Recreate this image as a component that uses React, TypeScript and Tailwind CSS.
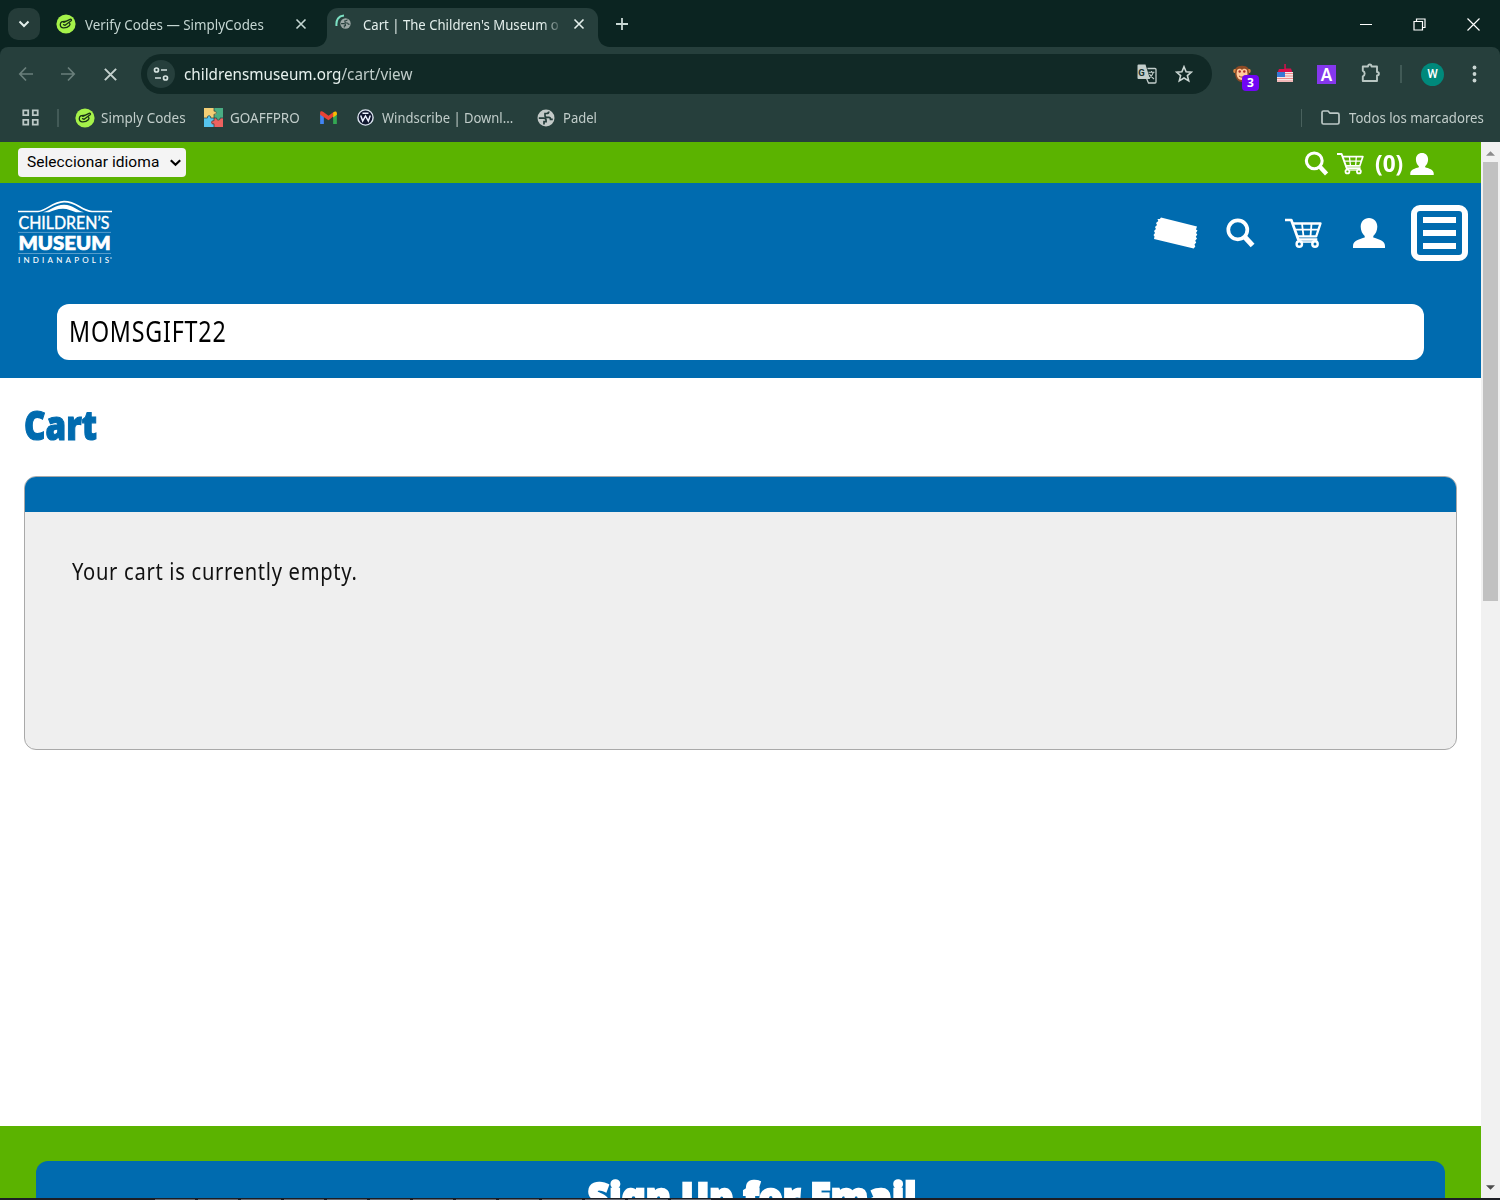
import React from "react";

const CHROME_FONT = "font-['Noto_Sans','Open_Sans',sans-serif]";

type IconProps = { className?: string };

function CloseIcon({ className }: IconProps) {
  return (
    <svg viewBox="0 0 12 12" className={className} fill="none" stroke="currentColor" strokeWidth="1.6">
      <path d="M1.5 1.5l9 9M10.5 1.5l-9 9" />
    </svg>
  );
}

function SimplyIcon() {
  return (
    <svg viewBox="0 0 20 20" className="size-5 shrink-0">
      <circle cx="10" cy="10" r="9.6" fill="#a5f24a" />
      <path
        d="M9.500 7.400C6 7 4.500 8.200 4.300 10.200c-.2 2.300 1.200 3.900 3.500 3.700 2.300-.1 4.300-.9 5.500-2.200.8-.9.9-1.900.3-2.600M7.500 10.700l1.600.6 6-4.600c.9-.8.1-1.900-1-1.400L7.800 8.400"
        fill="none"
        stroke="#183116"
        strokeWidth="1.3"
        strokeLinecap="round"
        strokeLinejoin="round"
      />
    </svg>
  );
}

function GlobeIcon({ className }: IconProps) {
  return (
    <svg viewBox="0 0 18 18" className={className}>
      <circle cx="9" cy="9" r="8.500" fill="#c3cac8" />
      <path
        d="M1.800 9.200h4.700c1.700 0 2.600.8 2.600 2.200v1.200H7v2.900M11.800 2.500c0 1.600-.8 2-2.200 2H8v2.200c0 1.200.7 1.600 1.800 1.600h2c1.300 0 1.700.8 1.700 2h2.300"
        fill="none"
        stroke="#263f3c"
        strokeWidth="1.700"
      />
    </svg>
  );
}

function SearchIcon({ className }: IconProps) {
  return (
    <svg viewBox="0 0 29 30" className={className} fill="none" stroke="white">
      <circle cx="11.800" cy="11.800" r="9.500" strokeWidth="3.700" />
      <path d="M18.300 18.500l8.300 9" strokeWidth="5.200" />
    </svg>
  );
}

function CartIcon({ className }: IconProps) {
  return (
    <svg viewBox="0 0 37 30" className={className} fill="none" stroke="white" strokeLinejoin="round">
      <path d="M0 2h6.300l7 19.500h19" strokeWidth="2.700" />
      <path d="M8 5.500h27.500l-4.300 12.800H12.500" strokeWidth="2.300" />
      <path d="M10 11.700h23M17 5.500l1.500 12.800M26.500 5.500L25.500 18.300" strokeWidth="1.800" />
      <circle cx="14.300" cy="26" r="2.700" strokeWidth="2.400" />
      <circle cx="30" cy="26" r="2.700" strokeWidth="2.400" />
      <path d="M17 24h10.500" strokeWidth="1.600" />
    </svg>
  );
}

function PersonIcon({ className }: IconProps) {
  return (
    <svg viewBox="0 0 32 30" className={className} fill="white">
      <path d="M16 0c5 0 8.300 3.600 8.300 8.700 0 4-1.800 7.300-4 9.400v1.500c4.700 1.300 11.700 3.300 11.700 8.300V30H0v-2.100c0-5 7-7 11.700-8.300v-1.500c-2.200-2.100-4-5.400-4-9.400C7.700 3.600 11 0 16 0z" />
    </svg>
  );
}

function Logo() {
  return (
    <svg viewBox="0 0 94 64" className="mt-[18px] ml-[18px] h-16 w-[94px] overflow-visible">
      <path d="M0 10.500h20c9-.6 14-9.500 26-9.800C59 .5 63 9.900 74 10.500h20" fill="none" stroke="white" strokeWidth="1.700" />
      <path d="M25 11.200C32 10 37 4 46 3.800c9 0 13 6 20 7.400h-8c-5-1.500-8-3.500-13-3.500-6 0-10 2-14 3.500z" fill="white" />
      <text x="0.500" y="27.800" textLength="91" lengthAdjust="spacingAndGlyphs" fill="white" stroke="white" strokeWidth="0.400" fontSize="17.500" fontFamily="Lato, sans-serif">
        CHILDREN’S
      </text>
      <path d="M0 31.400h93M0 52.500h93" stroke="#5fa3cf" strokeWidth="0.900" />
      <text x="0.500" y="48.500" textLength="92" lengthAdjust="spacingAndGlyphs" fill="white" stroke="white" strokeWidth="0.700" fontSize="18" fontWeight="900" fontFamily="Lato, sans-serif">
        MUSEUM
      </text>
      <text x="0" y="62" textLength="91" fill="white" fontSize="8" fontWeight="500" fontFamily="Lato, sans-serif">
        INDIANAPOLIS
      </text>
      <circle cx="93" cy="57" r="0.700" fill="white" />
    </svg>
  );
}

function TabStrip() {
  return (
    <div className="flex h-[47px] shrink-0 bg-[#0b2421] text-[15px] text-[#c5d6d2]">
      <div className="mt-2 ml-2 flex size-8 items-center justify-center rounded-[10px] bg-[#253c39]">
        <svg viewBox="0 0 12 8" className="h-2 w-3" fill="none" stroke="#e3eeeb" strokeWidth="2">
          <path d="M1.500 1.500L6 6l4.500-4.500" />
        </svg>
      </div>
      <div className="flex h-12 w-[287px] items-center pl-4">
        <SimplyIcon />
        <span className="ml-[9px] w-[203px] origin-left scale-x-[0.892] whitespace-nowrap">Verify Codes — SimplyCodes</span>
        <CloseIcon className="ml-[7px] size-3" />
      </div>
      <div className="relative mt-2 flex h-[39px] w-[271px] rounded-t-[11px] bg-[#263f3c] text-[#e4efec]">
        <svg viewBox="0 0 12 12" className="absolute bottom-0 -left-3 size-3">
          <path d="M12 0v12H0c7 0 12-5 12-12z" fill="#263f3c" />
        </svg>
        <svg viewBox="0 0 12 12" className="absolute -right-3 bottom-0 size-3">
          <path d="M0 0v12h12C5 12 0 7 0 0z" fill="#263f3c" />
        </svg>
        <div className="relative mt-[10px] ml-[13px] size-3">
          <GlobeIcon className="size-[11px] opacity-75" />
          <svg viewBox="0 0 17 17" className="absolute -top-[4px] -left-[5px] size-[17px]" fill="none" stroke="#7ce0c3" strokeWidth="2">
            <path d="M1.500 12C.8 6 3.500 2 9 1.500" />
          </svg>
        </div>
        <div className="mt-[5px] ml-[11px] h-6 w-[196px] [mask-image:linear-gradient(90deg,black_180px,transparent_200px)]">
          <span className="inline-block origin-left scale-x-[0.876] leading-[23px] whitespace-nowrap">Cart | The Children's Museum o</span>
        </div>
        <CloseIcon className="mt-[10px] ml-[14px] size-3" />
      </div>
      <svg viewBox="0 0 14 14" className="mt-[17px] ml-[17px] size-[14px]" stroke="#c9d8d4" strokeWidth="1.800">
        <path d="M7 1v12M1 7h12" />
      </svg>
      <div className="mr-5 ml-auto flex items-center gap-[41px] pt-px text-white">
        <div className="h-px w-3 bg-white" />
        <svg viewBox="0 0 13 13" className="size-[13px]" fill="none" stroke="currentColor" strokeWidth="1.200">
          <path d="M1 3.500h8.500V12H1zM3.500 3.500V1H12v8.500H9.500" />
        </svg>
        <svg viewBox="0 0 13 13" className="size-[13px]" stroke="currentColor" strokeWidth="1.200">
          <path d="M.5.5l12 12M12.500.5l-12 12" />
        </svg>
      </div>
    </div>
  );
}

function Toolbar() {
  return (
    <div className="flex h-[54px] items-center rounded-tr-lg rounded-tl-lg bg-[#263f3c] text-[#c3d0cd]">
      <svg viewBox="0 0 16 16" className="ml-[18px] size-4" fill="none" stroke="#6a7f7b" strokeWidth="1.700">
        <path d="M15 8H2M8 1.500L1.800 8 8 14.500" />
      </svg>
      <svg viewBox="0 0 16 16" className="ml-[26px] size-4" fill="none" stroke="#6a7f7b" strokeWidth="1.700">
        <path d="M1 8h13M8 1.500L14.200 8 8 14.500" />
      </svg>
      <CloseIcon className="ml-[27px] size-[15px]" />
      <div className="ml-[23px] flex h-10 w-[1071px] items-center rounded-full bg-[#112926] pl-[6px] text-[16px]">
        <div className="flex size-7 items-center justify-center rounded-full bg-[#263f3c]">
          <svg viewBox="0 0 16 16" className="size-4" fill="none" stroke="#d5e2df" strokeWidth="1.700">
            <circle cx="3.500" cy="4" r="2" />
            <path d="M8 4h6M2 12h6" />
            <circle cx="12.500" cy="12" r="2" />
          </svg>
        </div>
        <span className="ml-[9px] w-[300px] origin-left scale-x-[0.953] whitespace-nowrap text-[#e7f1ee]">
          childrensmuseum.org<span className="text-[#c0cdca]">/cart/view</span>
        </span>
        <svg viewBox="0 0 20 20" className="ml-auto h-5 w-5">
          <path d="M1.500.500h7L13 15H1.500a1 1 0 01-1-1V1.500a1 1 0 011-1z" fill="#c3cecb" />
          <path d="M10.500 4.500H18a1 1 0 011 1V18a1 1 0 01-1 1h-6.500l-1.800-4.300" fill="none" stroke="#c3cecb" strokeWidth="1.300" />
          <text x="1.200" y="11.500" fontSize="9.500" fontWeight="700" fill="#17302d" fontFamily="Roboto, sans-serif">G</text>
          <path d="M11.500 8.200h6M14.500 7v1.200M16.500 8.200c-.8 2.800-2.200 4.300-4.500 6M12.500 10c1 2 2.500 3.500 4.500 5" fill="none" stroke="#c3cecb" strokeWidth="1.100" />
        </svg>
        <svg viewBox="0 0 18 18" className="mr-[19px] ml-[18px] size-[18px]" fill="none" stroke="#cbd6d3" strokeWidth="1.600">
          <path d="M9 1.700l2.100 5 5.400.4-4.100 3.500 1.300 5.300L9 13l-4.700 2.900 1.300-5.300L1.500 7.100l5.400-.4z" />
        </svg>
      </div>
      <div className="relative ml-[21px] size-[18px]">
        <svg viewBox="0 0 18 18" className="size-[18px]">
          <circle cx="2.500" cy="6" r="2.300" fill="#d98642" />
          <circle cx="15.500" cy="6" r="2.300" fill="#d98642" />
          <path d="M3 3c2-3 10-3 12 0l1 5c0 4-2 9-7 9S2 12 2 8z" fill="#8d4a25" />
          <path d="M4 5c2-2 4-1 5 0 1-1 3-2 5 0l.5 4c-.5 3-2 6-5.500 6S4 12 3.500 9z" fill="#ffc99b" />
          <circle cx="6.700" cy="6.500" r="1.200" fill="#b12b26" />
          <circle cx="11.300" cy="6.500" r="1.200" fill="#b12b26" />
          <path d="M6 11c2 1.500 4 1.500 6 0" stroke="#9b4525" fill="none" />
        </svg>
        <span className="absolute top-[10px] left-[9px] flex h-4 w-[17px] items-center justify-center rounded-[4px] bg-[#7105f5] font-['Noto_Sans',sans-serif] text-[12px] font-bold text-white">
          3
        </span>
      </div>
      <svg viewBox="0 0 18 20" className="mb-[2px] ml-[25px] h-5 w-[18px]">
        <path d="M8.300 1h1.500v4.500H15l2 5.500H1l2-5h5.300z" fill="#d90f4d" />
        <path d="M1 9h16v10H1z" fill="#f5e8e8" />
        <path d="M1 9h8v5H1z" fill="#3978d5" />
        <path d="M9 10.500h8M9 13h8M1 15.500h16M1 18h16" stroke="#ed8a8a" strokeWidth="1" />
      </svg>
      <span className="ml-[23px] flex h-[19px] w-[19px] items-center justify-center bg-[#8537ed] font-['Noto_Sans',sans-serif] text-[17px] leading-none font-semibold text-white">
        A
      </span>
      <svg viewBox="0 0 20 20" className="mb-[2px] ml-6 size-5" fill="none" stroke="#b9c7c3" strokeWidth="1.900" strokeLinejoin="round">
        <path d="M2.800 3.500h5.200c0-2.600 3.500-2.600 3.500 0H17v5.500c2.500 0 2.500 3.500 0 3.500V18H2.800v-4.700c2.500-.8 2.500-4.700 0-5.500z" />
      </svg>
      <div className="ml-5 h-[18px] w-[2px] bg-[#415a56]" />
      <div className="ml-[19px] flex size-[23px] items-center justify-center rounded-full bg-[#00897b] font-['Roboto',sans-serif] text-[12px] font-medium text-white">W</div>
      <svg viewBox="0 0 4 18" className="ml-7 h-[18px] w-[5px]" fill="#c9d5d2">
        <circle cx="2" cy="2.500" r="1.900" />
        <circle cx="2" cy="9" r="1.900" />
        <circle cx="2" cy="15.500" r="1.900" />
      </svg>
    </div>
  );
}

function Bookmarks() {
  return (
    <div className="flex h-[41px] items-center bg-[#263f3c] pb-2 text-[14.500px] whitespace-nowrap text-[#c1cdca]">
      <svg viewBox="0 0 17 17" className="ml-[22px] size-[17px] shrink-0" fill="none" stroke="#bcc9c6" strokeWidth="1.800">
        <path d="M1.300 1.300h4.900v4.900H1.300zM10.800 1.300h4.900v4.900h-4.900zM1.300 10.800h4.900v4.900H1.300zM10.800 10.800h4.900v4.900h-4.900z" />
      </svg>
      <div className="ml-[18px] h-[18px] w-[2px] bg-[#425a57]" />
      <div className="ml-4 flex w-[129px] items-center gap-[6px]">
        <SimplyIcon />
        <span className="w-[84px] origin-left scale-x-[0.93]">Simply Codes</span>
      </div>
      <div className="flex w-[115px] items-center gap-[7px]">
        <svg viewBox="0 0 19 19" className="size-[19px] shrink-0">
          <path d="M0 0h10v10H0z" fill="#f3ce75" />
          <path d="M10 0h9v10h-9z" fill="#49ad83" />
          <path d="M0 10h10v9H0z" fill="#56c4ee" />
          <path d="M10 10h9v9h-9z" fill="#ed625f" />
          <circle cx="10.500" cy="5" r="2" fill="#f3ce75" />
          <circle cx="14.500" cy="10" r="2" fill="#49ad83" />
          <circle cx="9" cy="14.500" r="2" fill="#ed625f" />
          <circle cx="5" cy="9.500" r="2" fill="#56c4ee" />
          <path d="M10 0v3.200c3-1 3 4 0 3V10h2.700c-.7 2.800 4 2.800 3.300 0h3M10 19v-3.200c-3 1-3-4 0-3V10H6.700c.7-3-4-3-3.300 0H0" fill="none" stroke="#263f3c" strokeWidth="0.700" />
        </svg>
        <span className="w-[70px] origin-left scale-x-[0.93]">GOAFFPRO</span>
      </div>
      <svg viewBox="0 0 18 14" className="ml-px h-[13px] w-[17px] shrink-0">
        <path d="M0 2.500V14h4V6z" fill="#4285f4" />
        <path d="M18 2.500V14h-4V6z" fill="#34a853" />
        <path d="M0 4V2C0 0 2 0 3.500 1L9 5l5.500-4L14 6 9 10z" fill="#ea4335" />
        <path d="M14 1.500C16 0 18 0 18 2.500V4l-4 3z" fill="#fbbc04" />
      </svg>
      <div className="ml-5 flex w-[180px] items-center gap-2">
        <svg viewBox="0 0 17 17" className="size-[17px] shrink-0">
          <circle cx="8.500" cy="8.500" r="7.600" fill="#10172f" stroke="#dce4ef" strokeWidth="1.400" />
          <path d="M3.700 6.500l2 5.500 2.800-5 2.800 5 2-5.500M5.500 4.300h6" fill="none" stroke="#eef3ff" strokeWidth="1.500" />
        </svg>
        <span className="w-[132px] origin-left scale-x-[0.897]">Windscribe | Downl...</span>
      </div>
      <div className="flex items-center gap-2">
        <GlobeIcon className="size-[18px] shrink-0" />
        <span className="origin-left scale-x-[0.9]">Padel</span>
      </div>
      <div className="ml-auto h-[18px] w-px bg-[#49615d]" />
      <svg viewBox="0 0 19 15" className="ml-[19px] h-[15px] w-[19px] shrink-0" fill="none" stroke="#bdc9c6" strokeWidth="1.700">
        <path d="M1 2.500Q1 1 2.500 1H7l2 2.200h7.500Q18 3.200 18 4.700v7.800q0 1.500-1.500 1.500h-14Q1 14 1 12.500z" />
      </svg>
      <span className="ml-[9px] w-[151px] origin-left scale-x-[0.908]">Todos los marcadores</span>
    </div>
  );
}

function TopBar() {
  return (
    <div className="flex h-[41px] shrink-0 items-center bg-[#5bb300]">
      <div className="ml-[18px] flex h-[29px] w-[168px] items-center rounded-[4px] bg-[#f4f4f4] pl-[9px] text-[15.500px] text-black">
        <span className="w-[133px] pt-px font-['Roboto',sans-serif] tracking-[0.05px] whitespace-nowrap">Seleccionar idioma</span>
        <svg viewBox="0 0 11 8" className="ml-[10px] h-2 w-[11px]" fill="none" stroke="black" strokeWidth="2.200">
          <path d="M.8 1.200l4.700 4.500 4.700-4.500" />
        </svg>
      </div>
      <SearchIcon className="mt-[2px] ml-auto h-[25px] w-[25px]" />
      <CartIcon className="mt-px ml-2 h-[23px] w-[27px]" />
      <span className="ml-[11px] w-[30px] origin-left scale-x-[0.94] font-['Noto_Sans',sans-serif] text-[24px] leading-none font-bold text-white">(0)</span>
      <PersonIcon className="mt-[3px] mr-[47px] ml-[5px] h-[22px] w-6" />
    </div>
  );
}

function Header() {
  return (
    <header className="h-[195px] shrink-0 bg-[#006baf]">
      <div className="flex h-[121px] items-start">
        <Logo />
        <div className="mt-[22px] mr-[13px] ml-auto flex h-14 items-center">
          <svg viewBox="0 0 45 32" className="h-8 w-[45px]" fill="white">
            <path d="M8 .5l36 9-1 3 1.500 1-1.500 2.500 1.300 1.500-1.500 2.300 1.200 1.700-1.800 2.200 1 1.800-1.700 2 .8 2-1.600 2L1 22l.5-2.500L.5 18l1.500-2-1-2 1.900-2-.9-2 2-2-1-2 2.300-2L4.500 2l2.300 0z" />
          </svg>
          <SearchIcon className="ml-[28px] h-[30px] w-[29px]" />
          <CartIcon className="ml-[30px] h-[30px] w-[37px]" />
          <PersonIcon className="ml-[31px] h-[30px] w-8" />
          <div className="ml-[26px] flex h-14 w-[57px] flex-col items-center justify-center gap-[7px] rounded-[9px] border-[6px] border-white">
            <div className="h-[6px] w-[33px] bg-white" />
            <div className="h-[6px] w-[33px] bg-white" />
            <div className="h-[6px] w-[33px] bg-white" />
          </div>
        </div>
      </div>
      <div className="mr-[57px] ml-[57px] flex h-14 items-center rounded-[12px] bg-white pb-[2px] pl-[12px]">
        <span className="origin-left scale-x-[0.815] font-['Noto_Sans',sans-serif] text-[28.500px] leading-none tracking-[1px] text-black">MOMSGIFT22</span>
      </div>
    </header>
  );
}

function CartPage() {
  return (
    <main className="h-[748px] shrink-0 bg-white px-6">
      <h1 className="flex h-[98px] origin-left scale-x-[0.81] items-center pb-[5px] font-['Noto_Sans',sans-serif] text-[41px] leading-none font-black text-[#006baf] [-webkit-text-stroke:1.2px_#006baf]">Cart</h1>
      <section className="h-[274px] overflow-hidden rounded-[12px] border border-[#a9a9a9] bg-[#efefef]">
        <div className="-mx-px -mt-px h-[35.500px] bg-[#006baf]" />
        <p className="mt-[42px] ml-[47px] origin-left scale-x-[0.84] font-['Noto_Sans',sans-serif] text-[24px] leading-[34px] tracking-[0.820px] text-[#111]">Your cart is currently empty.</p>
      </section>
    </main>
  );
}

function SignUp() {
  return (
    <footer className="min-h-0 flex-1 overflow-hidden bg-[#5bb300] px-9 pt-[35px]">
      <div className="h-20 rounded-[12px] bg-[#006baf] pt-[13px] text-center">
        <h2 className="scale-x-[0.918] pl-[25px] font-['Noto_Sans',sans-serif] text-[41px] leading-[44px] font-black text-white [-webkit-text-stroke:2.400px_white]">Sign Up for Email</h2>
      </div>
    </footer>
  );
}

function Scrollbar() {
  return (
    <div className="flex w-[19px] shrink-0 flex-col items-center bg-[#f1f1f1]">
      <svg viewBox="0 0 10 5" className="mt-[9px] h-[5px] w-[9px]" fill="#8b8b8b">
        <path d="M0 5l5-5 5 5z" />
      </svg>
      <div className="mt-[6px] h-[439px] w-[15px] bg-[#c1c1c1]" />
      <svg viewBox="0 0 10 5" className="mt-auto mb-2 h-[5px] w-[9px]" fill="#4d4d4d">
        <path d="M0 0l5 5 5-5z" />
      </svg>
    </div>
  );
}

export default function App() {
  return (
    <div className={`flex h-[1200px] w-[1500px] flex-col overflow-hidden bg-[#1c1e25] ${CHROME_FONT}`}>
      <TabStrip />
      <div className="h-[95px] shrink-0 bg-[#0b2421]">
        <Toolbar />
        <Bookmarks />
      </div>
      <div className="flex h-[1056px] shrink-0">
        <div className="flex w-[1481px] shrink-0 flex-col">
          <TopBar />
          <Header />
          <CartPage />
          <SignUp />
        </div>
        <Scrollbar />
      </div>
      <div className="flex h-[2px] items-end gap-[3px] bg-[#1c1e25] pl-[155px]">
        {Array.from({ length: 13 }, (_, i) => (
          <div key={i} className="h-px w-10 bg-[#666970]" />
        ))}
      </div>
    </div>
  );
}
